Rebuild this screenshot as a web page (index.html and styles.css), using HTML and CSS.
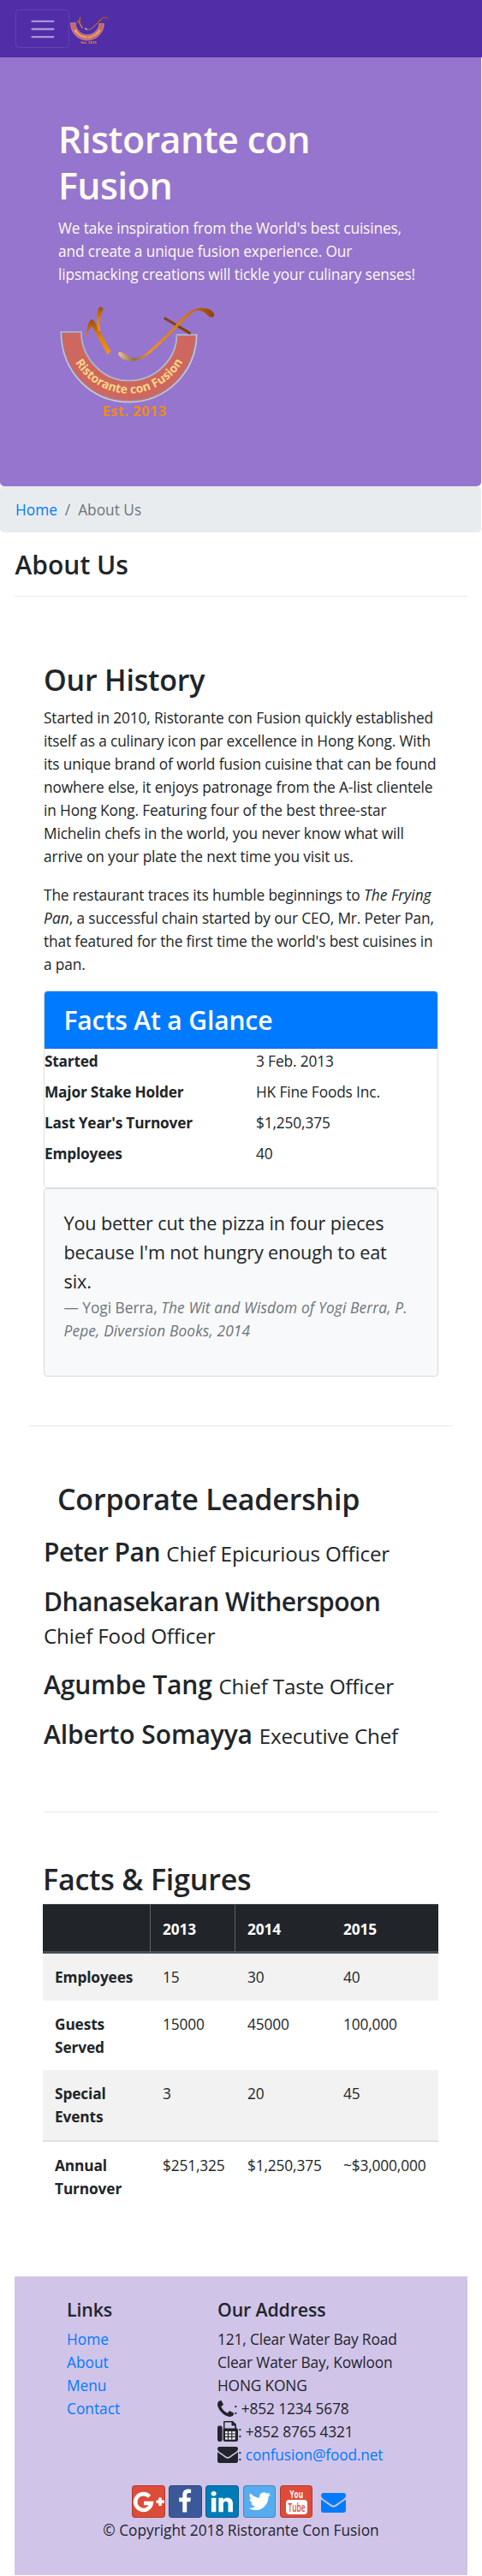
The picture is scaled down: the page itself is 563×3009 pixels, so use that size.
FILE: index.html
```html
<!DOCTYPE html>
<html lang="en">
<head>
<meta charset="utf-8">
<title>Ristorante Con Fusion: About Us</title>
<link rel="stylesheet" href="styles.css">
</head>
<body>
<svg class="defs" aria-hidden="true">
  <defs>
    <linearGradient id="gold" x1="0" y1="0" x2="0" y2="1"><stop offset="0" stop-color="#9a5008"/><stop offset=".5" stop-color="#e07f0c"/><stop offset="1" stop-color="#f0921c"/></linearGradient>
    <linearGradient id="sweep" x1="0" y1="0" x2="1" y2="0"><stop offset="0" stop-color="#f5bd8a"/><stop offset=".16" stop-color="#8f7050"/><stop offset=".32" stop-color="#f0921c"/><stop offset=".7" stop-color="#d8780c"/><stop offset="1" stop-color="#8a4606"/></linearGradient>
    <path id="smile" d="M70 224 C112 312 190 357 271 357 C352 357 430 312 474 222"/>
    <symbol id="logo" viewBox="30 50 545 395">
      <path d="M34 142H104C106 235 180 312 271 312S437 240 439 152H508C506 285 400 387 271 387S36 285 34 142Z" fill="#cd675f" stroke="#c9cbd8" stroke-width="5"/>
      <path d="M36 143H103C106 235 180 311 271 311S436 240 439 152H505C503 280 400 381 271 381S40 285 36 143Z" fill="none" stroke="#6f9bc8" stroke-width="2"/>
      <path d="M123 158C120 135 130 108 139 98C150 98 154 114 162 126L209 210L196 221L142 122C130 132 127 145 126 158Z" fill="url(#gold)"/>
      <path d="M163 138C156 105 158 78 165 60C170 51 182 54 181 65C175 80 166 95 171 140Z" fill="url(#gold)"/>
      <path d="M398 95L484 146" stroke="#834207" stroke-width="9" stroke-linecap="round"/>
      <path d="M235 213C245 205 262 228 290 233C325 231 345 203 378 175C440 120 470 62 520 58C548 57 567 66 570 82C569 92 559 94 549 86C530 66 510 60 492 75C440 122 405 165 355 208C325 235 300 246 275 244C250 240 230 226 235 213Z" fill="url(#sweep)"/>
      <text class="logo-name"><textPath href="#smile" startOffset="50%" text-anchor="middle">Ristorante con Fusion</textPath></text>
      <text class="logo-year" x="178" y="435" textLength="224">Est. 2013</text>
    </symbol>
    <symbol id="envelope" viewBox="0 256 1792 1408"><path d="M1792 710v794q0 66-47 113t-113 47h-1472q-66 0-113-47t-47-113v-794q44 49 101 87 362 246 497 345 57 42 92.500 65.500t94.500 48 110 24.500h2q51 0 110-24.500t94.500-48 92.500-65.500q170-123 498-345 57-39 100-87zm0-294q0 79-49 151t-122 123q-376 261-468 325-10 7-42.500 31t-54 38.500-52 32.500-57.500 27-50 9h-2q-23 0-50-9t-57.500-27-52-32.500-54-38.500-42.500-31q-91-64-262-182.500t-205-142.500q-62-42-117-115.500t-55-136.500q0-78 41.500-130t118.500-52h1472q65 0 112.500 47t47.500 113z"/></symbol>
  </defs>
</svg>

<nav class="navbar">
  <button class="toggler" aria-label="Toggle navigation">
    <svg viewBox="0 0 30 30"><path d="M4 7h22M4 15h22M4 23h22" stroke="rgba(255,255,255,.5)" stroke-width="2" stroke-linecap="round"/></svg>
  </button>
  <svg class="brand"><use href="#logo"/></svg>
</nav>

<header class="hero">
  <h1>Ristorante con<br>Fusion</h1>
  <p>We take inspiration from the World's best cuisines,<br>and create a unique fusion experience. Our<br>lipsmacking creations will tickle your culinary senses!</p>
  <svg class="hero-logo"><use href="#logo"/></svg>
</header>

<ol class="breadcrumb"><li><a href="#">Home</a></li><li class="sep">/</li><li>About Us</li></ol>

<h3 class="page-title">About Us</h3>
<hr class="rule rule-title">

<section class="history">
  <h2>Our History</h2>
  <p>Started in 2010, Ristorante con Fusion quickly established<br>itself as a culinary icon par excellence in Hong Kong. With<br>its unique brand of world fusion cuisine that can be found<br>nowhere else, it enjoys patronage from the A-list clientele<br>in Hong Kong. Featuring four of the best three-star<br>Michelin chefs in the world, you never know what will<br>arrive on your plate the next time you visit us.</p>
  <p>The restaurant traces its humble beginnings to <em>The Frying<br>Pan</em>, a successful chain started by our CEO, Mr. Peter Pan,<br>that featured for the first time the world's best cuisines in<br>a pan.</p>
  <div class="card">
    <h3 class="card-header">Facts At a Glance</h3>
    <dl>
      <dt>Started</dt><dd>3 Feb. 2013</dd>
      <dt>Major Stake Holder</dt><dd>HK Fine Foods Inc.</dd>
      <dt>Last Year's Turnover</dt><dd>$1,250,375</dd>
      <dt>Employees</dt><dd>40</dd>
    </dl>
  </div>
  <div class="card quote">
    <p class="words">You better cut the pizza in four pieces<br>because I'm not hungry enough to eat<br>six.</p>
    <p class="source">— Yogi Berra, <em>The Wit and Wisdom of Yogi Berra, P.<br>Pepe, Diversion Books, 2014</em></p>
  </div>
</section>
<hr class="rule rule-wide">

<section class="leaders">
  <h2>Corporate Leadership</h2>
  <h3>Peter Pan <small>Chief Epicurious Officer</small></h3>
  <h3>Dhanasekaran Witherspoon<br><small>Chief Food Officer</small></h3>
  <h3 class="loose">Agumbe Tang <small>Chief Taste Officer</small></h3>
  <h3 class="loose">Alberto Somayya <small>Executive Chef</small></h3>
</section>
<hr class="rule rule-narrow">

<section class="figures">
  <h2>Facts &amp; Figures</h2>
  <table>
    <colgroup><col class="c1"><col class="c2"><col class="c3"><col class="c4"></colgroup>
    <thead><tr><th></th><th>2013</th><th>2014</th><th>2015</th></tr></thead>
    <tbody>
      <tr class="odd"><th>Employees</th><td>15</td><td>30</td><td>40</td></tr>
      <tr class="tall"><th>Guests<br>Served</th><td>15000</td><td>45000</td><td>100,000</td></tr>
      <tr class="odd special"><th>Special<br>Events</th><td>3</td><td>20</td><td>45</td></tr>
      <tr class="tall"><th>Annual<br>Turnover</th><td>$251,325</td><td>$1,250,375</td><td>~$3,000,000</td></tr>
    </tbody>
  </table>
</section>

<footer class="footer">
  <div class="columns">
    <div class="links">
      <h5>Links</h5>
      <a href="#">Home</a><a href="#">About</a><a href="#">Menu</a><a href="#">Contact</a>
    </div>
    <address>
      <h5>Our Address</h5>
      <div>121, Clear Water Bay Road</div>
      <div>Clear Water Bay, Kowloon</div>
      <div>HONG KONG</div>
      <div class="line"><svg class="phone" viewBox="192 128 1408 1408"><path d="M1600 1240q0 27-10 70.500t-21 68.500q-21 50-122 106-94 51-186 51-27 0-53-3.500t-57.500-12.500-47-14.500-55.500-20.500-49-18q-98-35-175-83-127-79-264-216t-216-264q-48-77-83-175-3-9-18-49t-20.500-55.500-14.500-47-12.500-57.500-3.500-53q0-92 51-186 56-101 106-122 25-11 68.500-21t70.500-10q14 0 21 3 18 6 53 76 11 19 30 54t35 63.500 31 53.500q3 4 17.500 25t21.500 35.500 7 28.500q0 20-28.500 50t-62 55-62 53-28.500 46q0 9 5 22.500t8.500 20.500 14 24 11.500 19q76 137 174 235t235 174q2 1 19 11.500t24 14 20.500 8.500 22.500 5q18 0 46-28.500t53-62 55-62 50-28.500q14 0 28.500 7t35.500 21.500 25 17.500q25 15 53.500 31t63.500 35 54 30q70 35 76 53 3 7 3 21z"/></svg><span>: +852 1234 5678</span></div>
      <div class="line"><svg class="fax" viewBox="0 0 24 24"><rect x="0" y="5.500" width="5.600" height="18.500" rx="2.200"/><path fill-rule="evenodd" d="M7 1.300Q7 0 8.300 0H18L22 4V8Q24 8.500 24 10.500V21.500Q24 24 21.500 24H9Q6.600 24 6.600 21.500V10.500Q6.600 9.500 7 9ZM8.500 1.600V8.500H20.300V5.600H17.200Q16.500 5.600 16.500 4.800V1.600ZM9 12V21.500H20.500V12Z"/><path d="M9 12h11.500v9.500H9z" fill="#fff" opacity=".75"/><path d="M12.500 12v9.500M16.800 12v9.500M9 15h11.500M9 18.300h11.500" stroke="#212529" stroke-width="1.200"/></svg><span>: +852 8765 4321</span></div>
      <div class="line"><svg class="mail"><use href="#envelope"/></svg><span>: <a href="#">confusion@food.net</a></span></div>
    </address>
  </div>
  <div class="social">
    <a class="btn google" href="#"><svg viewBox="0 0 39 38"><path d="M20.500 13.200A9.400 9.400 0 1 0 22.800 21H14" fill="none" stroke="#fff" stroke-width="4.600"/><path d="M33 14.500v9.500M28.500 19.300h9.500" stroke="#fff" stroke-width="3.500"/></svg></a>
    <a class="btn facebook" href="#"><svg viewBox="0 0 39 38"><path transform="translate(4.500 4.600) scale(.0161)" fill="#fff" d="M1343 12v264h-157q-86 0-116 36t-30 108v189h293l-39 296h-254v759h-306v-759h-255v-296h255v-218q0-186 104-288.500t277-102.500q147 0 228 12z"/></svg></a>
    <a class="btn linkedin" href="#"><svg viewBox="0 0 39 38"><path transform="translate(4.500 4.500) scale(.0165)" fill="#fff" d="M477 625v991h-330v-991h330zm21-306q1 73-50.500 122t-135.500 49h-2q-82 0-132-49t-50-122q0-74 51.500-122.500t134.500-48.500 133 48.500 51 122.500zm1166 729v568h-329v-530q0-105-40.500-164.500t-126.500-59.500q-63 0-105.500 34.500t-63.500 85.500q-11 30-11 81v553h-329q2-399 2-647t-1-296l-1-48h329v144h-2q20-32 41-56t56.500-52 87-43.500 114.500-15.500q171 0 275 113.500t104 332.500z"/></svg></a>
    <a class="btn twitter" href="#"><svg viewBox="0 0 39 38"><path transform="translate(4.700 4) scale(.0163)" fill="#fff" d="M1684 408q-67 98-162 167 1 14 1 42 0 130-38 259.500t-115.500 248.500-184.500 210.500-258 146-323 54.500q-271 0-496-145 35 4 78 4 225 0 401-138-105-2-188-64.500t-114-159.500q33 5 61 5 43 0 85-11-112-23-185.500-111.500t-73.500-205.500v-4q68 38 146 41-66-44-105-115t-39-154q0-88 44-163 121 149 294.500 238.500t371.500 99.500q-8-38-8-74 0-134 94.500-228.500t228.500-94.500q140 0 236 102 109-21 205-78-37 115-142 178 93-10 186-50z"/></svg></a>
    <a class="btn youtube" href="#"><svg viewBox="0 0 39 38"><text x="11.500" y="15.200" class="you" textLength="15.500" lengthAdjust="spacingAndGlyphs">You</text><rect x="7" y="17" width="25" height="17" rx="4" fill="#fff"/><text x="9.500" y="31" class="tube" textLength="20" lengthAdjust="spacingAndGlyphs">Tube</text></svg></a>
    <a class="btn plain" href="#"><svg class="big-mail"><use href="#envelope"/></svg></a>
  </div>
  <p class="copyright">© Copyright 2018 Ristorante Con Fusion</p>
</footer>
</body>
</html>
```
FILE: styles.css
```css
* { box-sizing: border-box; }
html { background: #fff; }
body {
  margin: 0;
  width: 563px;
  height: 3009px;
  overflow: hidden;
  font: 400 17.300px/27px "Open Sans", "Noto Sans", sans-serif;
  letter-spacing: -0.13px;
  color: #212529;
  white-space: nowrap;
}
h1, h2, h3, h5, p, ol, dl, dd { margin: 0; padding: 0; }
h1, h2, h3, h5 { font-weight: 600; }
h1 { font-size: 43px; line-height: 54px; letter-spacing: -0.6px; }
h2 { font-size: 34px; line-height: 43.2px; letter-spacing: -0.2px; }
h3 { font-size: 30px; line-height: 37.8px; }
h5 { font-size: 21.300px; line-height: 27px; }
a { color: #007bff; text-decoration: none; }
svg { display: block; }
.defs { position: absolute; width: 0; height: 0; }
.logo-name { font: 700 42px "Open Sans", sans-serif; letter-spacing: 0; fill: #ffd685; }
.logo-year { font: 700 50px "Open Sans", sans-serif; letter-spacing: 0; fill: #ed8b16; }

.navbar { display: flex; align-items: center; height: 67px; padding-left: 18px; background: #512da8; }
.toggler { width: 63px; height: 45px; padding: 4.500px 13.500px; border: 1px solid rgba(255,255,255,.1); border-radius: 4.500px; background: none; }
.toggler svg { width: 34px; height: 34px; }
.brand { width: 45px; height: 33px; margin: 4px 0 0 1px; }

.hero { width: 562px; height: 501px; padding: 69px 0 0 68px; background: #9575cd; color: floralwhite; border-radius: 0 0 5px 5px; }
.hero p { margin-top: 9px; }
.hero-logo { width: 182px; height: 132px; margin: 23px 0 0 2px; }

.breadcrumb { display: flex; gap: 9px; width: 562px; height: 54px; padding: 14px 18px; list-style: none; background: #e9ecef; border-radius: 4.500px; color: #6c757d; letter-spacing: 0; }
.page-title { margin: 19px 0 0 17.500px; letter-spacing: 0; }
.rule { height: 1px; border: 0; background: #e8e8e8; margin: 0; }
.rule-title { margin: 17px 17px 0; }

.history { margin: 76px 51px 0; }
.history > p { margin: 9px 0 18px; }
.history > p + p { margin-bottom: 17px; }
.history em { letter-spacing: 0.1px; }
.card { border: 1px solid rgba(0,0,0,.125); border-radius: 4.500px; background: #fff; }
.card-header { height: 66.800px; padding: 14.500px 22.500px; background: #007bff; color: #fff; border-radius: 4px 4px 0 0; border-bottom: 1px solid rgba(0,0,0,.125); }
.card dl { display: grid; grid-template-columns: 247px 1fr; row-gap: 9px; height: 162px; padding-top: 1px; align-content: start; }
dt { font-weight: 700; letter-spacing: -0.2px; }
.quote { height: 220px; padding: 23.500px 22.500px; background: #f8f9fa; }
.words { font-size: 21.600px; line-height: 33.750px; }
.source { color: #6c757d; letter-spacing: 0; }
.source em { letter-spacing: 0.15px; }

.rule-wide { margin: 57px 34px 0; }
.leaders { height: 450px; padding: 64px 0 0 51px; }
.leaders h2 { margin: 0 0 21px 16px; }
.leaders h3 { margin-bottom: 20.700px; letter-spacing: -0.5px; }
.leaders .loose { letter-spacing: -0.1px; }
.leaders small { font-size: 24.200px; font-weight: 400; line-height: 1; letter-spacing: -0.15px; }
.rule-narrow { margin: 0 51px; }

.figures { margin-left: 50px; padding-top: 57px; height: 542px; }
table { width: 462px; margin-top: 7px; border-collapse: separate; border-spacing: 0; table-layout: fixed; }
.c1 { width: 126px; } .c2 { width: 99px; } .c3 { width: 112px; } .c4 { width: 125px; }
th, td { height: 55px; padding: 14px 0 0 14px; text-align: left; vertical-align: top; }
th { font-weight: 700; }
thead th { height: 58px; padding-top: 15px; background: #212529; color: #fff; border-top: 1px solid #454d55; border-bottom: 3px solid #454d55; }
thead th:nth-child(-n+2) { border-right: 1px solid #5b6269; }
.odd { background: #f2f2f2; }
.tall th, .tall td { height: 81px; }
.special th, .special td { height: 84px; border-bottom: 2px solid #dee2e6; }

.footer { height: 349px; margin: 0 17px; padding-top: 25px; background: #d1c4e9; }
.columns { display: grid; grid-template-columns: 176px 1fr; padding-left: 61px; height: 210px; align-content: start; }
.columns h5 { margin-bottom: 8px; }
.links a { display: block; letter-spacing: 0; }
address { font-style: normal; }
.line { display: flex; align-items: center; height: 27px; }
.line svg { fill: #212529; }
.phone { width: 19px; height: 19px; }
.fax { width: 24px; height: 24px; }
.mail { width: 24px; height: 19px; }
.social { display: flex; gap: 4.500px; height: 48px; padding: 9px 0 0 137px; }
.btn { width: 38.700px; height: 38px; border-radius: 4px; border: 1px solid rgba(0,0,0,.2); }
.btn svg { width: 39px; height: 38px; margin: -1px; overflow: visible; }
.google, .youtube { background: #dd4b39; }
.facebook { background: #3b5998; }
.linkedin { background: #007bb6; }
.twitter { background: #55acee; }
.btn.plain { border-color: transparent; padding: 8px 0 0 4px; }
.plain .big-mail { width: 29px; height: 23px; margin: 0; fill: #007bff; }
.you { font: 700 13px "Open Sans", sans-serif; letter-spacing: 0; fill: #fff; }
.tube { font: 600 14px "Open Sans", sans-serif; letter-spacing: 0; fill: #dd4b39; }
.copyright { text-align: center; letter-spacing: 0; }
```
